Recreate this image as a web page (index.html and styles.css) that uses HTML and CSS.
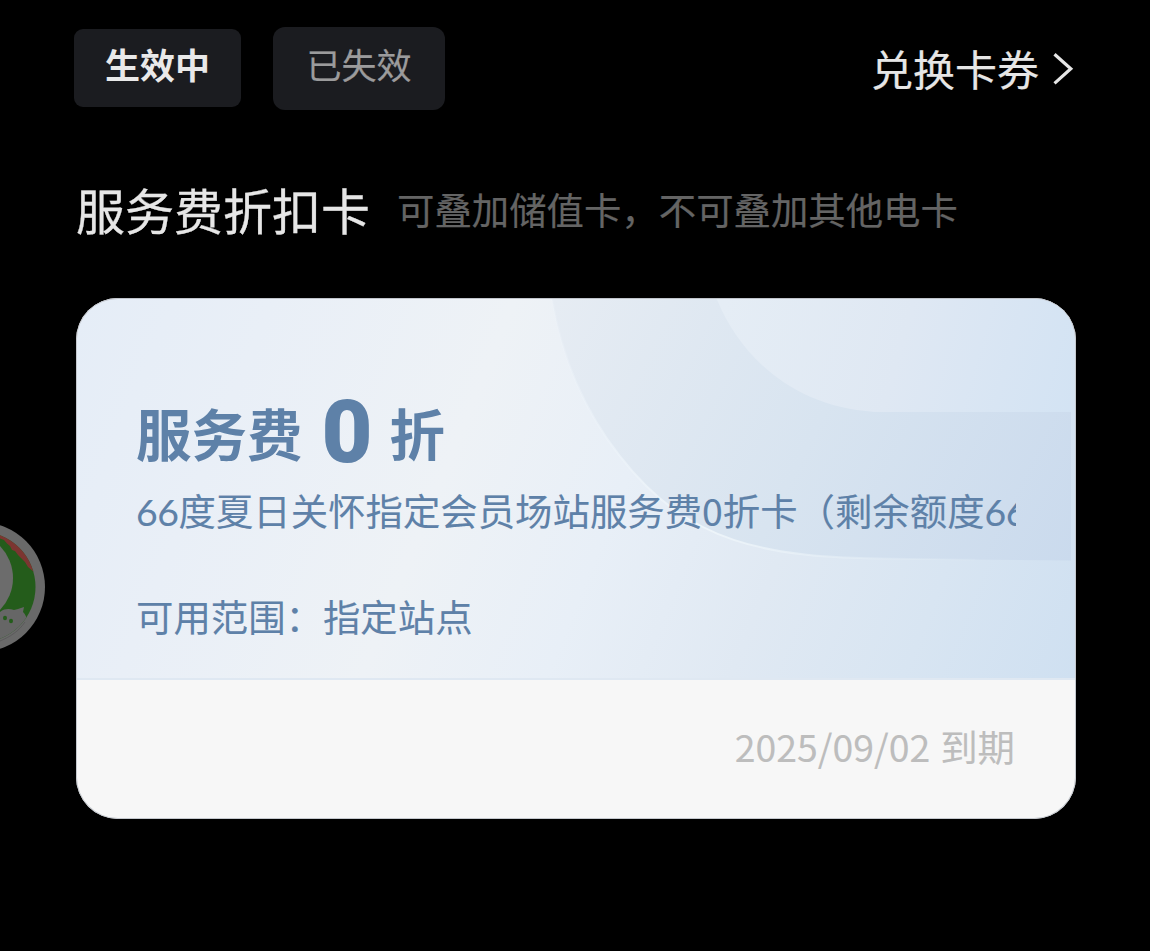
FILE: index.html
```html
<!DOCTYPE html>
<html lang="zh-CN">
<head>
<meta charset="utf-8">
<title>服务费折扣卡</title>
<link rel="stylesheet" href="styles.css">
</head>
<body>
<main class="page">
  <header class="toolbar">
    <nav class="tabs">
      <button class="tab tab-active">生效中</button>
      <button class="tab tab-expired">已失效</button>
    </nav>
    <a class="redeem">
      <span>兑换卡券</span>
      <svg class="chevron" viewBox="0 0 22 34" width="22" height="34"><path d="M2.500 2.200 18.800 16.800 2.500 31.400" fill="none" stroke="#e6e6e6" stroke-width="3.200"/></svg>
    </a>
  </header>

  <section class="heading">
    <h1 class="heading-title">服务费折扣卡</h1>
    <p class="heading-note">可叠加储值卡，不可叠加其他电卡</p>
  </section>

  <article class="card">
    <div class="card-main">
      <svg class="card-art" viewBox="0 0 1000 381" preserveAspectRatio="none">
        <defs>
          <linearGradient id="band" gradientUnits="userSpaceOnUse" x1="480" y1="0" x2="1000" y2="260">
            <stop offset="0" stop-color="#e6ecf3"/>
            <stop offset=".5" stop-color="#d8e4f0"/>
            <stop offset="1" stop-color="#cadaed"/>
          </linearGradient>
          <linearGradient id="inner" gradientUnits="userSpaceOnUse" x1="650" y1="0" x2="1000" y2="100">
            <stop offset="0" stop-color="#e5edf5"/>
            <stop offset=".5" stop-color="#dfe8f3"/>
            <stop offset="1" stop-color="#d3e3f3"/>
          </linearGradient>
          <linearGradient id="rim" gradientUnits="userSpaceOnUse" x1="476" y1="0" x2="900" y2="262">
            <stop offset="0" stop-color="#eef4fa" stop-opacity=".2"/>
            <stop offset=".5" stop-color="#eef5fa"/>
            <stop offset="1" stop-color="#e6f0f7" stop-opacity=".1"/>
          </linearGradient>
        </defs>
        <path d="M476 0C486 60 508 112 544 158C612 246 690 260 814 261L996 263V0Z" fill="url(#band)"/>
        <path d="M476 0C486 60 508 112 544 158C612 246 690 260 814 261L900 262" fill="none" stroke="url(#rim)" stroke-width="2"/>
        <path d="M641 0C662 52 712 108 799 113.500H996V0Z" fill="url(#inner)"/>
      </svg>
      <div class="card-text">
        <h2 class="discount"><span class="unit">服务费</span><strong class="rate">0</strong><span class="unit">折</span></h2>
        <p class="desc"><span class="digits">66</span>度夏日关怀指定会员场站服务费0折卡（剩余额度<span class="digits">66</span></p>
        <p class="scope">可用范围：指定站点</p>
      </div>
    </div>
    <footer class="card-footer"><span>2025/09/02</span><span>到期</span></footer>
  </article>
</main>

<svg class="float-badge" viewBox="0 0 46 132" width="46" height="132">
  <defs><clipPath id="disc"><circle cx="-20" cy="65" r="55.500"/></clipPath></defs>
  <circle cx="-20" cy="65" r="65" fill="#696969"/>
  <g clip-path="url(#disc)">
    <rect width="46" height="132" fill="#245c1b"/>
    <path d="M0 16.500 4 18 7 21.500 10 24 12 28 15 29 18 33 21 36 25 40 28 45 34 50V0H0Z" fill="#7c3531"/>
    <circle cx="-33" cy="56" r="46" fill="#6c6c6c"/>
    <path d="M0 90C5 86 10 87 14 88L18 87 24 85 23 90C25 92 26 94 27 97L34 96 20 132H0Z" fill="#666"/>
  </g>
  <path d="M0 119C10 115 19 109 25 100" fill="none" stroke="#5b5b5b" stroke-width="1"/>
  <ellipse cx="5" cy="96" rx="2" ry="2.300" fill="#245c1b"/>
  <ellipse cx="11" cy="99" rx="2" ry="2.300" fill="#245c1b"/>
</svg>
</body>
</html>
```

FILE: styles.css
```css
* { box-sizing: border-box; margin: 0; padding: 0; }

body {
  background: #000;
  color: #e6e6e6;
  font-family: "Noto Sans CJK SC", sans-serif;
  overflow: hidden;
}

.page {
  width: 1150px;
  height: 951px;
  padding: 26px 74px 0;
}

.toolbar {
  display: flex;
  justify-content: space-between;
  height: 84px;
}

.tabs { display: flex; align-items: center; gap: 32px; }

.tab {
  border: 0;
  background: #1b1c20;
  font-family: inherit;
  font-size: 35px;
  line-height: 50px;
  text-align: center;
}

.tab-active {
  width: 167px;
  height: 78px;
  padding-bottom: 9px;
  border-radius: 9px;
  color: #e9e9e9;
  font-weight: 700;
}

.tab-expired {
  width: 172px;
  height: 83px;
  padding-bottom: 9px;
  border-radius: 12px;
  color: #9b9b9c;
  -webkit-text-stroke: .2px;
}

.redeem {
  display: flex;
  align-items: center;
  gap: 13px;
  padding-right: 2px;
  font-size: 42px;
  line-height: 60px;
  -webkit-text-stroke: .2px;
}

.redeem span { padding-bottom: 1px; }
.chevron { display: block; margin-top: 2px; }

.heading {
  display: flex;
  align-items: center;
  gap: 27px;
  height: 80px;
  margin-top: 60px;
  padding-left: 2px;
  white-space: nowrap;
}

.heading-title {
  padding-bottom: 3px;
  font-size: 49px;
  font-weight: 400;
  line-height: 72px;
  -webkit-text-stroke: .3px;
}

.heading-note {
  padding-bottom: 2px;
  font-size: 37.4px;
  line-height: 54px;
  color: #646464;
  -webkit-text-stroke: .2px;
}

.card {
  width: 1000px;
  height: 521px;
  margin: 48px 0 0 2px;
  border-radius: 42px;
  background: #f7f7f7;
  overflow: hidden;
  box-shadow: inset 0 0 0 1px #c4c8ce;
}

.card-main {
  position: relative;
  height: 382px;
  margin: 0 1px;
  border-top: 1px solid #c0c4cb;
  border-bottom: 2px solid #dfe8f2;
  border-radius: 41px 41px 0 0;
  overflow: hidden;
  background: linear-gradient(112deg, #e5edf7 0%, #e9eff7 17%, #eef2f6 38%, #e8eff7 54%, #e0e9f3 70%, #d8e5f2 85%, #cfe0f1 100%);
}

.card-art {
  position: absolute;
  inset: 0;
  width: 100%;
  height: 100%;
}

.card-text {
  position: relative;
  width: 939px;
  padding: 82px 0 0 59px;
  color: #5e81a8;
  white-space: nowrap;
}

.discount {
  display: flex;
  align-items: flex-start;
  height: 101px;
  font-weight: 700;
  line-height: 100px;
}

.unit { margin-top: 1px; font-size: 55.5px; }

.rate {
  margin: 1px 17px 0 19px;
  font-family: Roboto, sans-serif;
  font-size: 88px;
}

.desc, .scope {
  font-size: 37.4px;
  line-height: 56px;
  -webkit-text-stroke: .1px;
}

.desc { overflow: hidden; }
.digits { font-family: Lato, sans-serif; letter-spacing: -.4px; }
.scope { margin-top: 48px; }

.card-footer {
  display: flex;
  justify-content: flex-end;
  gap: 10px;
  padding: 38px 61px 0 0;
  color: #bdbdbd;
  font-size: 37.4px;
  line-height: 56px;
  -webkit-text-stroke: .1px;
}

.float-badge {
  position: absolute;
  left: 0;
  top: 522px;
}
```
